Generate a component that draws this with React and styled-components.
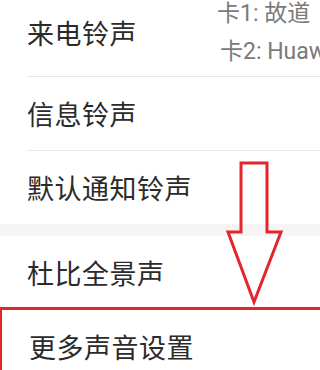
import React from 'react'
import styled, { createGlobalStyle } from 'styled-components'

const GlobalStyle = createGlobalStyle`
  html, body {
    margin: 0;
    padding: 0;
    background: #fff;
  }
  body {
    font-family: Roboto, "Noto Sans CJK SC", sans-serif;
  }
`

const Screen = styled.div`
  position: relative;
  width: 320px;
  height: 370px;
  overflow: hidden;
  background: #fff;
`

const List = styled.div`
  display: flex;
  flex-direction: column;
  margin-top: ${(props) => props.offset || 0}px;
`

const Row = styled.div`
  display: flex;
  align-items: center;
  justify-content: space-between;
  height: ${(props) => props.height}px;
  padding-left: 27px;
  box-sizing: border-box;
`

const RowInner = styled.div`
  flex: 1;
  display: flex;
  align-items: center;
  justify-content: space-between;
  align-self: stretch;
  padding-bottom: ${(props) => props.lift || 0}px;
  border-bottom: ${(props) => (props.divider ? '1px solid #e8e8e8' : 'none')};
  min-width: 0;
`

const Title = styled.span`
  font-family: "Noto Sans CJK SC", sans-serif;
  font-size: 27px;
  letter-spacing: 0.5px;
  color: #2b2b2b;
  white-space: nowrap;
`

const Values = styled.div`
  display: flex;
  flex-direction: column;
  width: 103px;
  overflow: hidden;
  flex-shrink: 0;
`

const Value = styled.span`
  font-family: Roboto, "Noto Sans CJK SC", sans-serif;
  font-size: 23px;
  line-height: 38px;
  color: #7a7a7a;
  white-space: nowrap;
  padding-left: ${(props) => props.indent || 0}px;
`

const Band = styled.div`
  height: 12px;
  background: #f5f5f5;
`

const Highlight = styled.div`
  margin-top: -2px;
  width: 340px;
  border: 2px solid #e4262c;
  border-top-width: 3px;
`

const Arrow = styled.svg`
  position: absolute;
  left: 0;
  top: 0;
  pointer-events: none;
`

export default function App() {
  return (
    <>
      <GlobalStyle />
      <Screen>
        <List offset={-5}>
          <Row height={82}>
            <RowInner divider lift={6}>
              <Title>来电铃声</Title>
              <Values>
                <Value>卡1: 故道</Value>
                <Value indent={3}>卡2: Huawei Tune</Value>
              </Values>
            </RowInner>
          </Row>
          <Row height={74}>
            <RowInner divider>
              <Title>信息铃声</Title>
            </RowInner>
          </Row>
          <Row height={73}>
            <RowInner>
              <Title>默认通知铃声</Title>
            </RowInner>
          </Row>
          <Band />
          <Row height={73}>
            <RowInner>
              <Title>杜比全景声</Title>
            </RowInner>
          </Row>
          <Highlight>
            <Row height={72}>
              <RowInner>
                <Title>更多声音设置</Title>
              </RowInner>
            </Row>
          </Highlight>
        </List>
        <Arrow width="320" height="370" viewBox="0 0 320 370">
          <polygon
            points="241,163 267,163 267,232 281,232 254,302 228,232 241,232"
            fill="none"
            stroke="#e4262c"
            strokeWidth="3"
            strokeLinejoin="miter"
          />
        </Arrow>
      </Screen>
    </>
  )
}
